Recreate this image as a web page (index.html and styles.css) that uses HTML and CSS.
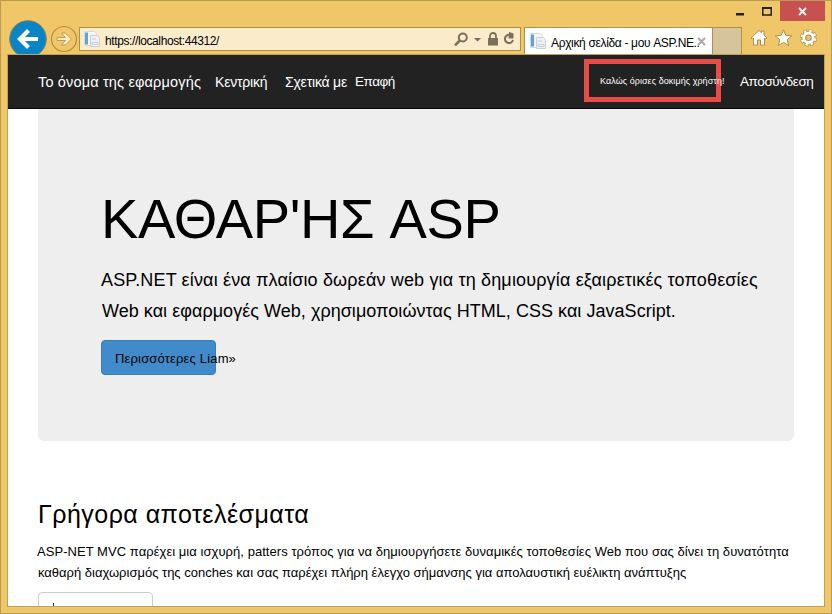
FILE: index.html
```html
<!DOCTYPE html>
<html lang="el">
<head>
<meta charset="utf-8">
<title>Αρχική σελίδα</title>
<link rel="stylesheet" href="styles.css">
</head>
<body>
<div class="window">
  <header class="chrome">
    <div class="back"><svg width="38" height="34" viewBox="0 0 38 34"><circle cx="19" cy="19" r="18.3" fill="#0785c6" stroke="#8f7f52"/><path d="M29 19H11M19.500 10.500L11 19l8.500 8.500" fill="none" stroke="#fff" stroke-width="4.200"/></svg></div>
    <svg class="forward" width="28" height="28" viewBox="0 0 28 28"><circle cx="14" cy="14" r="12.500" fill="none" stroke="#b38d43" stroke-width="1.200"/><path d="M7 12.500h8.500l-4-4.500h3.800l6 6-6 6h-3.800l4-4.500H7z" fill="#faebcb" stroke="#b38d43" stroke-width=".8"/></svg>
    <div class="address">
      <svg class="page-icon" width="16" height="16" viewBox="0 0 16 16"><path d="M.5.500h10l2 2v12H.5z" fill="#f3f5f8" stroke="#d5d9df"/><path d="M1 1.500h3v12H1z" fill="#5aa5d8"/><path d="M6.500 4.500h7l2 2v9h-9z" fill="#eef0f4" stroke="#cbd0d8"/><path d="M8 8h4M8 11.500h6v2H8z" fill="none" stroke="#c8cfda"/></svg>
      <span class="t url">https://localhost:44312/</span>
      <svg class="tools" width="64" height="18" viewBox="0 0 64 18"><g fill="none" stroke="#78705b" stroke-width="2"><circle cx="8.800" cy="6.500" r="4"/><path d="M5.800 9.500L1 14.300" stroke-width="2.600"/><path d="M57 4.300A4.100 4.100 0 1 0 59 9"/></g><path d="M20 7h7l-3.500 3.500zM34 7h10v7.500H34zM55 1l4.500 1.500V7.500H54.500z" fill="#78705b"/><path d="M36 8V5a3 3 0 0 1 6 0v3" fill="none" stroke="#78705b" stroke-width="1.800"/></svg>
    </div>
    <div class="tab">
      <svg class="page-icon" width="16" height="16" viewBox="0 0 16 16"><path d="M.5.500h10l2 2v12H.5z" fill="#f3f5f8" stroke="#d5d9df"/><path d="M1 1.500h3v12H1z" fill="#5aa5d8"/><path d="M6.500 4.500h7l2 2v9h-9z" fill="#eef0f4" stroke="#cbd0d8"/><path d="M8 8h4M8 11.500h6v2H8z" fill="none" stroke="#c8cfda"/></svg>
      <span class="t tab-title">Αρχική σελίδα - μου ASP.NE..</span>
      <svg class="tab-close" width="9" height="9" viewBox="0 0 9 9"><path d="M1 1l7 7M8 1L1 8" stroke="#aaa" stroke-width="2"/></svg>
    </div>
    <div class="new-tab"></div>
    <div class="controls">
      <div class="caption">
        <svg width="48" height="20" viewBox="0 0 48 20"><path d="M4 12h8v2.500H4z" fill="#222"/><path d="M30.750 7h8.500v7h-8.500z" fill="none" stroke="#222" stroke-width="1.500"/><path d="M30 6h10v2H30z" fill="#222"/></svg>
        <div class="close"><svg width="9" height="9" viewBox="0 0 9 9"><path d="M1 1l7 7M8 1L1 8" stroke="#fff" stroke-width="1.800"/></svg></div>
      </div>
      <svg class="commands" width="68" height="18" viewBox="0 0 68 18"><g fill="#fff" stroke="#ae8c4a" stroke-width="1"><path d="M1 9L9 1.500l2.500 2.300V2h2.500v4.200L17 9l-1.500 1L14.500 9v7h-4v-5h-3v5h-4V9l-1 1z"/><path d="M33.500.8l2.300 5.600 6 .4-4.600 3.900 1.500 5.900-5.200-3.200-5.200 3.200 1.500-5.900-4.600-3.900 6-.4z"/></g><g fill="none"><circle cx="58.500" cy="8.800" r="6.800" stroke="#ae8c4a" stroke-width="3.600" stroke-dasharray="3.600 1.740"/><circle cx="58.500" cy="8.800" r="4.600" stroke="#ae8c4a" stroke-width="4.800"/><circle cx="58.500" cy="8.800" r="6.800" stroke="#fff" stroke-width="2.400" stroke-dasharray="2.400 2.940" stroke-dashoffset="-.6"/><circle cx="58.500" cy="8.800" r="4.700" stroke="#fff" stroke-width="2.800"/></g></svg>
    </div>
  </header>
  <main class="page">
    <nav class="navbar">
      <a class="t brand">Το όνομα της εφαρμογής</a>
      <a class="t home">Κεντρική</a>
      <a class="t about">Σχετικά με</a>
      <a class="t contact">Επαφή</a>
      <div class="highlight"><span class="t welcome">Καλώς όρισες δοκιμής χρήστη!</span></div>
      <a class="t logoff">Αποσύνδεση</a>
    </nav>
    <section class="jumbotron">
      <h1 class="t title">ΚΑΘΑΡ'ΗΣ ASP</h1>
      <p class="t lead1">ASP.NET είναι ένα πλαίσιο δωρεάν web για τη δημιουργία εξαιρετικές τοποθεσίες</p>
      <p class="t lead2">Web και εφαρμογές Web, χρησιμοποιώντας HTML, CSS και JavaScript.</p>
      <a class="primary"><span class="t more">Περισσότερες Liam»</span></a>
    </section>
    <section class="intro">
      <h2 class="t subtitle">Γρήγορα αποτελέσματα</h2>
      <p class="t body1">ASP-NET MVC παρέχει μια ισχυρή, patters τρόπος για να δημιουργήσετε δυναμικές τοποθεσίες Web που σας δίνει τη δυνατότητα</p>
      <p class="t body2">καθαρή διαχωρισμός της conches και σας παρέχει πλήρη έλεγχο σήμανσης για απολαυστική ευέλικτη ανάπτυξης</p>
      <a class="secondary"><span class="stem"></span></a>
    </section>
  </main>
</div>
</body>
</html>
```
FILE: styles.css
```css
* { box-sizing: border-box; }
body { margin: 0; font-family: "Liberation Sans", Arial, sans-serif; color: #000; }
svg { display: block; flex: none; }
h1, h2, p { margin: 0; font-weight: 400; }
.t { display: block; white-space: nowrap; flex: none; }
.window { width: 832px; height: 614px; background: #efc768; border: 1px solid #b79b57; padding: 0 6px 6px; overflow: hidden; }
.chrome { height: 53px; display: flex; align-items: flex-end; }
.chrome > * { flex: none; }
.back { width: 38px; margin-left: 2px; }
.forward { margin: 0 1px 1px 3px; }
.address { width: 442px; height: 24px; margin-bottom: 3px; border: 1px solid #b08f49; background: #faebcb; display: flex; align-items: center; padding-left: 4px; }
.page-icon { margin-right: 5px; }
.url { width: 349px; font-size: 12px; line-height: 16px; padding-top: 3px; letter-spacing: -0.39px; }
.tools { margin-top: 2px; }
.tab { width: 189px; height: 27px; margin-left: 3px; border: 1px solid #b08f49; border-bottom: 0; background: #fff; display: flex; align-items: center; padding-left: 5px; }
.tab-title { width: 146px; font-size: 12px; line-height: 16px; padding-top: 3px; letter-spacing: -0.34px; }
.new-tab { width: 29px; height: 27px; border: 1px solid #b08f49; border-width: 1px 1px 0 0; background: #d6c59c; }
.controls { width: 83px; height: 53px; display: flex; flex-direction: column; align-items: flex-end; justify-content: space-between; }
.caption { display: flex; justify-content: flex-end; }
.close { flex: none; width: 45px; height: 20px; background: #c75050; display: flex; align-items: center; justify-content: center; }
.commands { margin: 0 7px 7px 0; }
.page { height: 553px; border: 1px solid #c39f55; background: #fff; overflow: hidden; }
.navbar { height: 54px; background: #222; border-bottom: 1px solid #080808; color: #fff; display: flex; align-items: center; padding-left: 30px; }
.navbar .t { line-height: 20px; font-size: 14px; letter-spacing: -0.2px; }
.navbar .brand { width: 177px; font-size: 14.500px; letter-spacing: 0.16px; }
.navbar .home { width: 70px; }
.navbar .about { width: 70px; }
.navbar .contact { width: 229px; font-size: 13.500px; letter-spacing: -0.5px; }
.highlight { width: 137px; height: 43px; margin: -2px 19px 0 0; border: 5px solid #e84c46; display: flex; align-items: center; padding-left: 11px; }
.navbar .welcome { font-size: 9px; letter-spacing: 0.06px; }
.navbar .logoff { font-size: 13.500px; letter-spacing: -0.4px; }
.jumbotron { width: 756px; height: 332px; margin-left: 30px; padding: 76px 0 0 63px; background: #eee; border-radius: 0 0 6px 6px; }
.title { font-size: 56px; line-height: 68px; letter-spacing: -0.4px; margin-bottom: 12px; }
.lead1, .lead2 { font-size: 18px; line-height: 31px; letter-spacing: 0.155px; }
.lead2 { letter-spacing: 0.04px; padding-left: 1px; }
.primary { width: 115px; height: 35px; margin-top: 13px; border: 1px solid #357ebd; border-radius: 4px; background: #428bca; display: flex; align-items: center; padding-left: 13px; }
.more { font-size: 13px; letter-spacing: 0.17px; padding-top: 2px; }
.intro { padding: 58px 0 0 30px; }
.subtitle { font-size: 25px; line-height: 30px; letter-spacing: 0.47px; margin-bottom: 12px; }
.body1, .body2 { font-size: 13px; line-height: 21px; }
.body1 { margin-left: -1px; letter-spacing: 0.05px; }
.secondary { display: block; width: 115px; height: 35px; margin-top: 9px; border: 1px solid #ccc; border-radius: 4px; padding: 10px 0 0 14px; }
.stem { display: block; width: 1px; height: 9px; background: #333; }
```
